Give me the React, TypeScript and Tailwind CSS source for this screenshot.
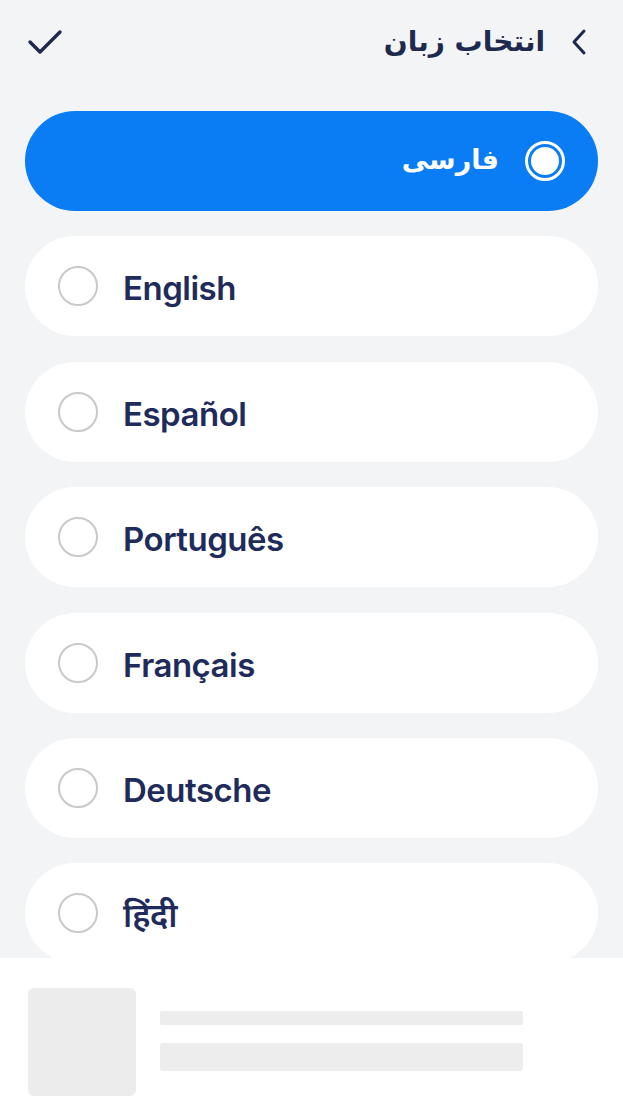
import React from "react";

const langs = ["English", "Español", "Português", "Français", "Deutsche", "हिंदी"];

function Radio({ selected }: { selected?: boolean }) {
  if (selected) {
    return (
      <div className="w-[40px] h-[40px] rounded-full border-[3px] border-white flex items-center justify-center">
        <div className="w-[28px] h-[28px] rounded-full bg-white" />
      </div>
    );
  }
  return <div className="w-[40px] h-[40px] rounded-full border-[2px] border-[#c9c9c9] bg-white" />;
}

export default function App() {
  return (
    <div
      className="w-[623px] h-[1108px] bg-[#f2f4f6] flex flex-col overflow-hidden"
      style={{ fontFamily: "Inter, 'Noto Sans', 'DejaVu Sans', sans-serif" }}
    >
      <div className="flex-1 overflow-hidden">
        <div className="h-[85px] flex items-center justify-between pl-[27px] pr-[36px] pb-[2px]">
          <svg width="36" height="28" viewBox="0 0 36 28" fill="none">
            <path d="M3 14 L13 24 L33 4" stroke="#1d2a4d" strokeWidth="3.4" strokeLinecap="round" strokeLinejoin="round" />
          </svg>
          <div className="flex items-center gap-[26px]">
            <span
              dir="rtl"
              className="text-[28px] font-bold text-[#1d2a4d] leading-none"
              style={{ fontFamily: "'DejaVu Sans', sans-serif" }}
            >
              انتخاب زبان
            </span>
            <svg width="16" height="28" viewBox="0 0 16 28" fill="none">
              <path d="M13 3 L3 14 L13 25" stroke="#1d2a4d" strokeWidth="3" strokeLinecap="round" strokeLinejoin="round" />
            </svg>
          </div>
        </div>
        <div className="flex flex-col gap-[25.4px] px-[25px] pt-[26px]">
          <div className="h-[100px] rounded-full bg-[#0a7cf4] flex items-center justify-end pr-[33px] gap-[26px] shrink-0">
            <span
              dir="rtl"
              className="text-[27px] font-bold text-white leading-none pb-[4px]"
              style={{ fontFamily: "'DejaVu Sans', sans-serif" }}
            >
              فارسی
            </span>
            <Radio selected />
          </div>
          {langs.map((l) => (
            <div key={l} className="h-[100px] rounded-full bg-white flex items-center pl-[33px] gap-[25px] shrink-0">
              <Radio />
              <span className="text-[33px] font-semibold text-[#1f2c5b] leading-none tracking-[-0.5px] pt-[5px]">{l}</span>
            </div>
          ))}
        </div>
      </div>
      <div className="h-[150px] bg-white flex items-start pt-[30px] pl-[28px] gap-[24px] shrink-0">
        <div className="w-[108px] h-[108px] rounded-[6px] bg-[#ececec]" />
        <div className="flex flex-col gap-[18px] w-[363px] pt-[23px]">
          <div className="h-[14px] bg-[#ededed] rounded-[2px]" />
          <div className="h-[28px] bg-[#ededed] rounded-[3px]" />
        </div>
      </div>
    </div>
  );
}
